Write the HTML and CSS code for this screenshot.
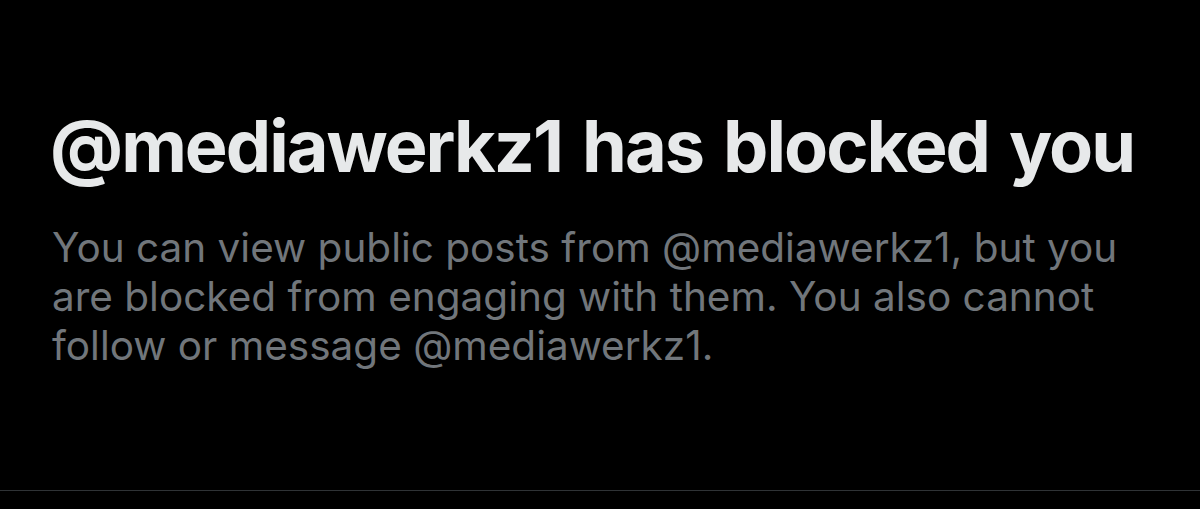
FILE: index.html
```html
<!DOCTYPE html>
<html>
<head>
<meta charset="utf-8">
<link rel="stylesheet" href="styles.css">
</head>
<body>
<main class="blocked">
  <h1 class="title">@mediawerkz1 has blocked you</h1>
  <p class="desc">You can view public posts from @mediawerkz1, but you are blocked from engaging with them. You also cannot follow or message @mediawerkz1.</p>
</main>
<div class="divider"></div>
</body>
</html>
```
FILE: styles.css
```css
html, body {
  margin: 0;
  padding: 0;
  background: #000;
  height: 509px;
  overflow: hidden;
}
body {
  display: flex;
  flex-direction: column;
  font-family: Inter, "Liberation Sans", sans-serif;
}
.blocked {
  padding: 106px 40px 0 50px;
  height: 490px;
  box-sizing: border-box;
  flex: none;
}
.title {
  margin: 0;
  color: #e7e9ea;
  font-size: 72px;
  font-weight: 700;
  letter-spacing: -2px;
  word-spacing: 5px;
  line-height: 80px;
  white-space: nowrap;
}
.desc {
  margin: 37px 0 0 2px;
  width: 1090px;
  color: #71767b;
  font-size: 40.5px;
  font-weight: 400;
  line-height: 49px;
}
.divider {
  flex: none;
  height: 1px;
  background: #2f3336;
}
```
